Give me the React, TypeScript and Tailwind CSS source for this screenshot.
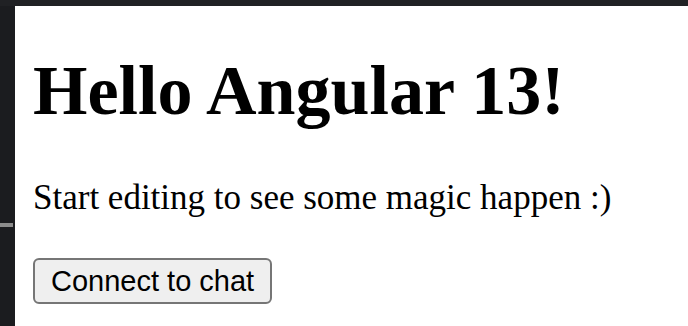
const App = () => {
  return (
    <div className="flex h-[326px] w-[688px] flex-col overflow-hidden bg-white">
      <div className="h-[6px] w-full shrink-0 bg-[#202124]" />
      <div className="flex flex-1">
        <div className="w-[15px] shrink-0 bg-[#1b1c1f]">
          <div className="mt-[217px] h-[4px] w-[13px] bg-[#8c8c8c]" />
        </div>
        <main className="flex flex-1 flex-col items-start pl-[18px] pt-[45px] text-black">
          <h1 className="font-['Liberation_Serif',serif] text-[70px] font-bold leading-[80px]">
            Hello Angular 13!
          </h1>
          <p className="mt-[47px] font-['Liberation_Serif',serif] text-[35px] leading-[40px]">
            Start editing to see some magic happen :)
          </p>
          <button
            type="button"
            className="mt-[40px] h-[46px] rounded-[6px] border-2 border-[#767676] bg-[#efefef] px-[16px] font-['Liberation_Sans',Arial,sans-serif] text-[29px] leading-[42px] text-black"
          >
            Connect to chat
          </button>
        </main>
      </div>
    </div>
  );
};

export default App;
